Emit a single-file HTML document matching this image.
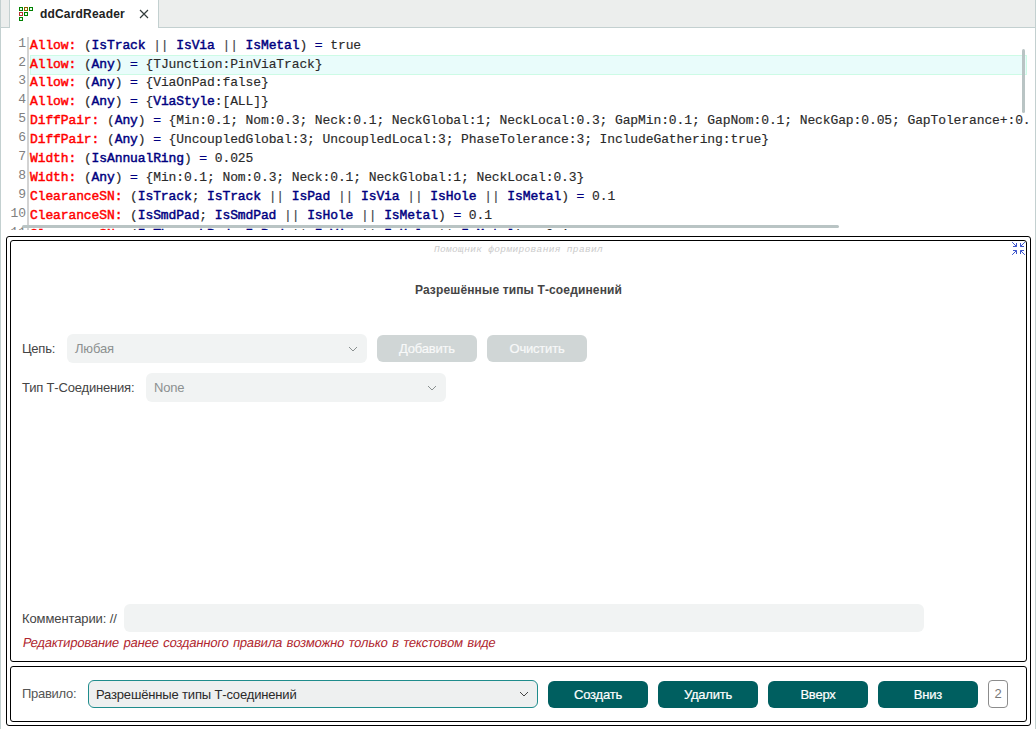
<!DOCTYPE html>
<html lang="ru">
<head>
<meta charset="utf-8">
<title>ddCardReader</title>
<style>
html,body{margin:0;padding:0;}
body{width:1036px;height:729px;position:relative;overflow:hidden;background:#fff;
 font-family:"Liberation Sans",sans-serif;font-size:13px;color:#444;}
.abs{position:absolute;}
#lstrip{left:0;top:0;width:1px;height:729px;background:#c3d0d0;}
#rstrip{left:1035px;top:0;width:1px;height:729px;background:#c3d0d0;}
#tabbar{left:1px;top:0;width:1034px;height:27px;background:#eceeed;border-bottom:1px solid #c3d0d0;}
#tab{left:9px;top:0;width:148px;height:28px;background:#fff;border-left:1px solid #c3d0d0;border-right:1px solid #c3d0d0;}
#tabtitle{left:40px;top:7px;font-weight:bold;font-size:12px;letter-spacing:0.18px;line-height:15px;color:#222;white-space:nowrap;}
/* editor */
#editor{left:1px;top:28px;width:1034px;height:202px;overflow:hidden;}
#gutline{left:26px;top:9px;width:2px;height:200px;background:#d3d3d3;}
.ln{position:absolute;left:0;width:25px;text-align:right;color:#808080;}
#code{position:absolute;left:0;top:0;width:1028px;height:202px;overflow:hidden;}
#code,.ln{font-family:"Liberation Mono",monospace;font-size:13px;letter-spacing:-0.105px;white-space:pre;}
.row{position:absolute;left:29px;height:19px;line-height:19px;color:#2a2a2a;-webkit-text-stroke:0.15px #2a2a2a;}
.ln{height:19px;line-height:19px;margin-top:-2px;}
.k{color:#f00;-webkit-text-stroke:0.45px #f00;}
.i{color:#000080;-webkit-text-stroke:0.45px #000080;}
.o{color:#000080;-webkit-text-stroke:0.3px #000080;}
.p{color:#4a4a55;}
#hl{left:29px;top:27px;width:995px;height:18px;background:#e9fcfb;border:1px solid #cdfbe6;}
#vthumb{left:1021px;top:21px;width:3px;height:64px;background:#b9c4c4;border-radius:2px;}
#hthumb{left:21px;top:197px;width:817px;height:3px;background:#b9c4c4;border-radius:2px;}
/* panel */
#outer{left:6px;top:236px;width:1023px;height:488px;border:1px solid #000;border-radius:3px;}
#box1{left:10px;top:240px;width:1015px;height:420px;border:1px solid #000;border-radius:3px;}
#box2{left:10px;top:666px;width:1015px;height:54px;border:1px solid #000;border-radius:3px;}
#sub{left:10px;top:244px;width:1017px;text-align:center;font-family:"Liberation Mono",monospace;font-style:italic;font-size:9.5px;letter-spacing:0.34px;line-height:12px;color:#cbcbcb;white-space:pre;}
#title{left:10px;top:282px;width:1017px;text-align:center;font-weight:bold;font-size:12px;letter-spacing:0.14px;line-height:16px;color:#444;}
.lbl{position:absolute;white-space:nowrap;color:#444;font-size:13px;line-height:16px;}
.combo{position:absolute;background:#f1f3f3;border-radius:6px;color:#8c9090;font-size:13px;box-sizing:border-box;}
.combo span{position:absolute;left:8px;top:7px;letter-spacing:-0.16px;line-height:16px;white-space:nowrap;}
.btn{position:absolute;letter-spacing:-0.2px;-webkit-text-stroke:0.2px currentColor;width:100px;height:27px;border-radius:6px;text-align:center;line-height:27px;font-size:13px;color:#fff;white-space:nowrap;}
.dis{background:#d0d6d6;color:#f8f9f9;}
.act{background:#005f60;}
svg{position:absolute;overflow:visible;}
</style>
</head>
<body>
<div id="lstrip" class="abs"></div>
<div id="rstrip" class="abs"></div>
<div id="tabbar" class="abs"></div>
<div id="tab" class="abs"></div>
<svg id="tabicon" style="left:19px;top:7px" width="15" height="15" viewBox="0 0 15 15" fill="none" stroke-width="1">
 <rect x="0.5" y="0.5" width="3" height="3" stroke="#008000" fill="#e4ffea"/>
 <rect x="5.5" y="0.5" width="3" height="3" stroke="#8a6200" fill="#fffbe8"/>
 <rect x="10.5" y="0.5" width="3" height="3" stroke="#008000" fill="#e4ffea"/>
 <rect x="0.5" y="5.5" width="3" height="3" stroke="#b83232" fill="#fff"/>
 <rect x="5.5" y="5.5" width="3" height="3" stroke="#008000" fill="#e4ffea"/>
 <rect x="0.5" y="10.5" width="3" height="3" stroke="#008000" fill="#e4ffea"/>
</svg>
<div id="tabtitle" class="abs">ddCardReader</div>
<svg style="left:140px;top:10px" width="8" height="8" viewBox="0 0 8 8" stroke="#333d3d" stroke-width="1.15" fill="none"><path d="M0 0L8 8M8 0L0 8"/></svg>

<div id="editor" class="abs">
 <div id="hl" class="abs"></div>
 <div id="gutline" class="abs"></div>
 <div id="code">
<div class="ln" style="top:8px">1</div><div class="row" style="top:8px"><span class="k">Allow:</span> (<span class="i">IsTrack</span> <span class="p">||</span> <span class="i">IsVia</span> <span class="p">||</span> <span class="i">IsMetal</span>) <span class="o">=</span> true</div>
<div class="ln" style="top:27px">2</div><div class="row" style="top:27px"><span class="k">Allow:</span> (<span class="i">Any</span>) <span class="o">=</span> {TJunction:PinViaTrack}</div>
<div class="ln" style="top:45px">3</div><div class="row" style="top:45px"><span class="k">Allow:</span> (<span class="i">Any</span>) <span class="o">=</span> {ViaOnPad:false}</div>
<div class="ln" style="top:64px">4</div><div class="row" style="top:64px"><span class="k">Allow:</span> (<span class="i">Any</span>) <span class="o">=</span> {<span class="i">ViaStyle</span>:[ALL]}</div>
<div class="ln" style="top:83px">5</div><div class="row" style="top:83px"><span class="k">DiffPair:</span> (<span class="i">Any</span>) <span class="o">=</span> {Min:0.1; Nom:0.3; Neck:0.1; NeckGlobal:1; NeckLocal:0.3; GapMin:0.1; GapNom:0.1; NeckGap:0.05; GapTolerance+:0.05; GapTolerance-:0.05}</div>
<div class="ln" style="top:102px">6</div><div class="row" style="top:102px"><span class="k">DiffPair:</span> (<span class="i">Any</span>) <span class="o">=</span> {UncoupledGlobal:3; UncoupledLocal:3; PhaseTolerance:3; IncludeGathering:true}</div>
<div class="ln" style="top:121px">7</div><div class="row" style="top:121px"><span class="k">Width:</span> (<span class="i">IsAnnualRing</span>) <span class="o">=</span> 0.025</div>
<div class="ln" style="top:140px">8</div><div class="row" style="top:140px"><span class="k">Width:</span> (<span class="i">Any</span>) <span class="o">=</span> {Min:0.1; Nom:0.3; Neck:0.1; NeckGlobal:1; NeckLocal:0.3}</div>
<div class="ln" style="top:159px">9</div><div class="row" style="top:159px"><span class="k">ClearanceSN:</span> (<span class="i">IsTrack</span>; <span class="i">IsTrack</span> <span class="p">||</span> <span class="i">IsPad</span> <span class="p">||</span> <span class="i">IsVia</span> <span class="p">||</span> <span class="i">IsHole</span> <span class="p">||</span> <span class="i">IsMetal</span>) <span class="o">=</span> 0.1</div>
<div class="ln" style="top:178px">10</div><div class="row" style="top:178px"><span class="k">ClearanceSN:</span> (<span class="i">IsSmdPad</span>; <span class="i">IsSmdPad</span> <span class="p">||</span> <span class="i">IsHole</span> <span class="p">||</span> <span class="i">IsMetal</span>) <span class="o">=</span> 0.1</div>
<div class="ln" style="top:197px">11</div><div class="row" style="top:197px"><span class="k">ClearanceSN:</span> (<span class="i">IsThroughPad</span>; <span class="i">IsPad</span> <span class="p">||</span> <span class="i">IsVia</span> <span class="p">||</span> <span class="i">IsHole</span> <span class="p">||</span> <span class="i">IsMetal</span>) <span class="o">=</span> 0.1</div>
 </div>
 <div id="vthumb" class="abs"></div>
 <div id="hthumb" class="abs"></div>
</div>

<div id="outer" class="abs"></div>
<div id="box1" class="abs"></div>
<div id="box2" class="abs"></div>

<div id="sub" class="abs">Помощник формирования правил</div>
<svg style="left:1012px;top:242px" width="13" height="13" viewBox="0 0 13 13" stroke="#3d55cb" stroke-width="1" fill="#3d55cb">
 <path d="M0.15 0.15L4.5 4.5M1 4.5H4.5V1" fill="none"/><path d="M2.6 4.2H4.2V2.6Z" stroke="none"/>
 <path d="M12.85 0.15L8.5 4.5M12 4.5H8.5V1" fill="none"/><path d="M10.4 4.2H8.8V2.6Z" stroke="none"/>
 <path d="M0.15 12.85L4.5 8.5M1 8.5H4.5V12" fill="none"/><path d="M2.6 8.8H4.2V10.4Z" stroke="none"/>
 <path d="M12.85 12.85L8.5 8.5M12 8.5H8.5V12" fill="none"/><path d="M10.4 8.8H8.8V10.4Z" stroke="none"/>
</svg>
<div id="title" class="abs">Разрешённые типы Т-соединений</div>

<div class="lbl" style="left:22px;top:341px;letter-spacing:-0.25px">Цепь:</div>
<div class="combo" style="left:67px;top:334px;width:300px;height:29px"><span>Любая</span></div>
<svg style="left:349px;top:347px" width="8" height="4" viewBox="0 0 8 4" stroke="#8a9090" stroke-width="1" fill="none"><path d="M0 0L4 4L8 0"/></svg>
<div class="btn dis" style="left:377px;top:335px">Добавить</div>
<div class="btn dis" style="left:487px;top:335px">Очистить</div>

<div class="lbl" style="left:22px;top:380px;letter-spacing:-0.18px">Тип Т-Соединения:</div>
<div class="combo" style="left:146px;top:373px;width:300px;height:29px"><span>None</span></div>
<svg style="left:428px;top:386px" width="8" height="4" viewBox="0 0 8 4" stroke="#8a9090" stroke-width="1" fill="none"><path d="M0 0L4 4L8 0"/></svg>

<div class="lbl" style="left:22px;top:611px;letter-spacing:-0.1px">Комментарии: //</div>
<div class="combo" style="left:124px;top:604px;width:800px;height:28px"></div>
<div class="lbl" id="warn" style="left:22px;top:635px;color:#b0262e;letter-spacing:-0.2px;word-spacing:1.1px;transform:skewX(-10deg);transform-origin:0 80%">Редактирование ранее созданного правила возможно только в текстовом виде</div>

<div class="lbl" style="left:22px;top:686px;letter-spacing:-0.28px;color:#555">Правило:</div>
<div class="combo" style="left:88px;top:680px;width:450px;height:28px;background:#eef0f0;border:1px solid #1f8c8c;color:#2a2a2a"><span style="left:7px;top:6px">Разрешённые типы Т-соединений</span></div>
<svg style="left:520px;top:692px" width="8" height="4" viewBox="0 0 8 4" stroke="#444" stroke-width="1" fill="none"><path d="M0 0L4 4L8 0"/></svg>
<div class="btn act" style="left:548px;top:681px">Создать</div>
<div class="btn act" style="left:658px;top:681px">Удалить</div>
<div class="btn act" style="left:768px;top:681px">Вверх</div>
<div class="btn act" style="left:878px;top:681px">Вниз</div>
<div class="abs" style="left:988px;top:680px;width:18px;height:26px;border:1px solid #8c8c8c;border-radius:4px;text-align:center;line-height:26px;font-size:13px;color:#777">2</div>
</body>
</html>
